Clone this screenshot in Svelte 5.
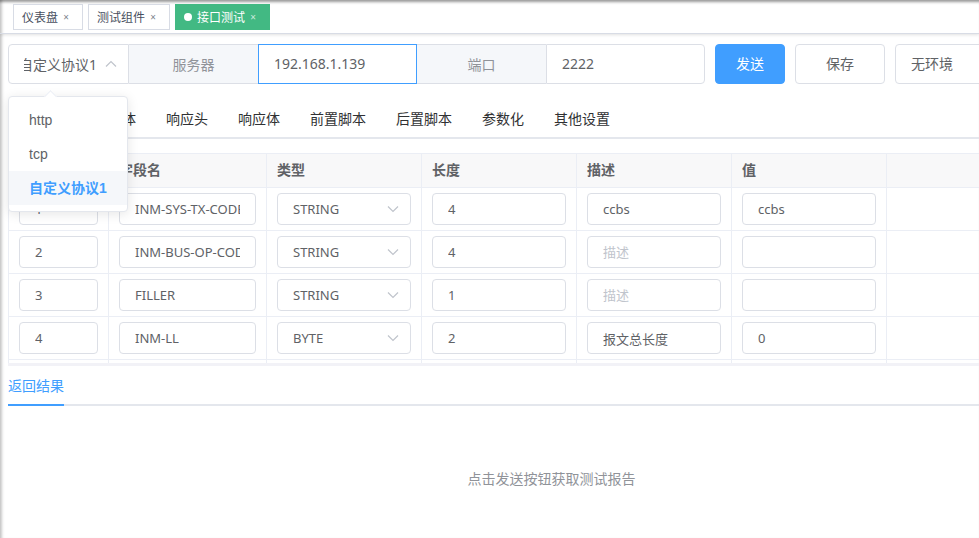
<script>
  const tags = [
    { title: '仪表盘' },
    { title: '测试组件' },
    { title: '接口测试', active: true }
  ];

  const protocols = ['http', 'tcp', '自定义协议1'];
  const tabs = ['请求体', '响应头', '响应体', '前置脚本', '后置脚本', '参数化', '其他设置'];
  const types = ['STRING', 'BYTE'];

  let protocol = $state('自定义协议1');
  let menuOpen = $state(true);
  let server = $state('192.168.1.139');
  let port = $state('2222');

  let rows = $state([
    { no: '1', name: 'INM-SYS-TX-CODE', type: 'STRING', length: '4', desc: 'ccbs', value: 'ccbs' },
    { no: '2', name: 'INM-BUS-OP-CODE', type: 'STRING', length: '4', desc: '', value: '' },
    { no: '3', name: 'FILLER', type: 'STRING', length: '1', desc: '', value: '' },
    { no: '4', name: 'INM-LL', type: 'BYTE', length: '2', desc: '报文总长度', value: '0' },
    { no: '', name: '', type: '', length: '', desc: '', value: '' }
  ]);

  function pick(name) {
    protocol = name;
    menuOpen = false;
  }
</script>

{#snippet chevron()}
  <svg class="chevron" viewBox="0 0 12 8" aria-hidden="true">
    <path d="M1 1.5 L6 6.5 L11 1.5" />
  </svg>
{/snippet}

<div class="page">
  <nav class="tags">
    {#each tags as tag}
      <a href="#{tag.title}" class="tag" class:active={tag.active}>
        {tag.title}<span class="close">×</span>
      </a>
    {/each}
  </nav>

  <main>
    <div class="toolbar">
      <div class="group">
        <div class="select protocol" class:open={menuOpen}>
          <select aria-label="协议" bind:value={protocol}>
            {#each protocols as p}
              <option>{p}</option>
            {/each}
          </select>
          {@render chevron()}
          {#if menuOpen}
            <ul class="menu">
              {#each protocols as p}
                <li><button class:selected={p === protocol} onclick={() => pick(p)}>{p}</button></li>
              {/each}
            </ul>
          {/if}
        </div>
        <label class="addon" for="server">服务器</label>
        <input id="server" class="focused" bind:value={server} />
        <label class="addon" for="port">端口</label>
        <input id="port" class="last" bind:value={port} />
      </div>
      <button class="btn primary">发送</button>
      <button class="btn">保存</button>
      <div class="select env">
        <select aria-label="环境">
          <option>无环境</option>
        </select>
        {@render chevron()}
      </div>
    </div>

    <div class="tabs request">
      {#each tabs as tab}
        <button class="tab">{tab}</button>
      {/each}
    </div>

    <div class="table-wrap">
      <table>
        <colgroup>
          <col class="c-no" />
          <col class="c-name" />
          <col class="c-std" />
          <col class="c-std" />
          <col class="c-std" />
          <col class="c-std" />
          <col />
        </colgroup>
        <thead>
          <tr>
            <th></th>
            <th>字段名</th>
            <th>类型</th>
            <th>长度</th>
            <th>描述</th>
            <th>值</th>
            <th></th>
          </tr>
        </thead>
        <tbody>
          {#each rows as row}
            <tr>
              <td><input aria-label="序号" bind:value={row.no} /></td>
              <td><input aria-label="字段名" bind:value={row.name} /></td>
              <td>
                <div class="select">
                  <select aria-label="类型" bind:value={row.type}>
                    {#each types as t}
                      <option>{t}</option>
                    {/each}
                  </select>
                  {@render chevron()}
                </div>
              </td>
              <td><input aria-label="长度" bind:value={row.length} /></td>
              <td><input aria-label="描述" placeholder="描述" bind:value={row.desc} /></td>
              <td><input aria-label="值" bind:value={row.value} /></td>
              <td></td>
            </tr>
          {/each}
        </tbody>
      </table>
    </div>

    <div class="tabs result">
      <button class="tab current">返回结果</button>
    </div>
    <p class="empty">点击发送按钮获取测试报告</p>
  </main>
</div>

<style>
  :global(body) {
    margin: 0;
    background: #fff;
    color: #303133;
    font-family: "Noto Sans", "Noto Sans CJK SC", sans-serif;
    font-size: 14px;
  }

  .page {
    min-height: 100vh;
    overflow: hidden;
    box-sizing: border-box;
    box-shadow: inset 0 4px 3px -2px rgba(0, 0, 0, 0.4), inset 4px 0 3px -2px rgba(0, 0, 0, 0.22);
  }

  input, select, button {
    box-sizing: border-box;
    margin: 0;
    font: inherit;
    outline: none;
  }

  input, select {
    width: 100%;
    height: 32px;
    padding: 0 15px;
    border: 1px solid #dcdfe6;
    border-radius: 4px;
    background: #fff;
    color: #606266;
    font-size: 13px;
    appearance: none;
  }
  input::placeholder { color: #c0c4cc; }

  /* opened pages */
  .tags {
    display: flex;
    gap: 5px;
    height: 34px;
    box-sizing: border-box;
    padding: 4px 13px 0;
    border-bottom: 1px solid #d8dce5;
    box-shadow: 0 1px 3px rgba(0, 0, 0, 0.12);
  }
  .tag {
    display: flex;
    align-items: center;
    height: 26px;
    box-sizing: border-box;
    padding: 0 8px;
    border: 1px solid #d8dce5;
    background: #fff;
    color: #495060;
    font-size: 12px;
    text-decoration: none;
  }
  .tag.active { background: #42b983; border-color: #42b983; color: #fff; }
  .tag.active::before {
    content: '';
    width: 8px;
    height: 8px;
    margin-right: 5px;
    border-radius: 50%;
    background: #fff;
  }
  .close { width: 16px; text-align: center; font-size: 10px; opacity: 0.7; }

  main { min-width: 1087px; padding: 10px 8px 0; }

  /* request line */
  .toolbar { display: flex; gap: 10px; }
  .toolbar input, .toolbar select { height: 40px; padding-bottom: 2px; font-size: 14px; }
  .group { display: flex; width: 697px; }
  .group input { flex: 1; min-width: 0; border-radius: 0; }
  .group input.focused { border-color: #409eff; }
  .group input.last { border-radius: 0 4px 4px 0; }
  .addon {
    display: flex;
    align-items: center;
    justify-content: center;
    width: 129px;
    box-sizing: border-box;
    border: 1px solid #dcdfe6;
    border-width: 1px 0;
    background: #f5f7fa;
    color: #909399;
  }

  .select { position: relative; }
  .chevron {
    position: absolute;
    top: 50%;
    right: 12px;
    width: 12px;
    height: 8px;
    margin-top: -4px;
    pointer-events: none;
  }
  .chevron path { fill: none; stroke: #c0c4cc; stroke-width: 1.2; }
  .open .chevron { transform: rotate(180deg); }

  .protocol { width: 121px; }
  .protocol select { padding: 0 30px 0 15px; border-radius: 4px 0 0 4px; text-indent: -5px; }
  .env { flex: 1; }

  .menu {
    position: absolute;
    top: 52px;
    left: 0;
    z-index: 2;
    width: 120px;
    box-sizing: border-box;
    margin: 0;
    padding: 6px 0;
    border: 1px solid #e4e7ed;
    border-radius: 4px;
    background: #fff;
    box-shadow: 0 2px 12px rgba(0, 0, 0, 0.1);
    list-style: none;
  }
  .menu::before {
    content: '';
    position: absolute;
    top: -5px;
    left: 37px;
    width: 8px;
    height: 8px;
    border: 1px solid #ebeef5;
    border-width: 1px 0 0 1px;
    background: #fff;
    transform: rotate(45deg);
  }
  .menu button {
    display: block;
    width: 100%;
    height: 34px;
    padding: 0 20px;
    border: 0;
    background: none;
    color: #606266;
    font-family: "Liberation Sans", "Noto Sans CJK SC", sans-serif;
    text-align: left;
    white-space: nowrap;
  }
  .menu button.selected { padding-bottom: 2px; background: #f5f7fa; color: #409eff; font-weight: 700; }

  .btn {
    width: 90px;
    height: 40px;
    padding: 0 0 2px;
    border: 1px solid #dcdfe6;
    border-radius: 4px;
    background: #fff;
    color: #606266;
  }
  .btn.primary { width: 70px; background: #409eff; border-color: #409eff; color: #fff; }

  .tabs {
    display: flex;
    gap: 30px;
    height: 40px;
    box-sizing: border-box;
    border-bottom: 2px solid #e4e7ed;
  }
  .tabs.request { margin-top: 15px; padding-left: 86px; }
  .tab {
    height: 40px;
    padding: 0 0 2px;
    border: 0;
    background: none;
    color: #303133;
    white-space: nowrap;
  }
  .tab.current { color: #409eff; box-shadow: inset 0 -2px #409eff; }

  /* message fields */
  .table-wrap {
    height: 210px;
    margin-top: 14px;
    overflow: hidden;
    border-bottom: 3px solid #f2f2f7;
  }
  table {
    width: 100%;
    border: 1px solid #ebeef5;
    border-width: 1px 0 0 1px;
    border-spacing: 0;
    table-layout: fixed;
  }
  th, td {
    box-sizing: border-box;
    padding: 5px 10px;
    border: 1px solid #ebeef5;
    border-width: 0 1px 1px 0;
    text-align: left;
  }
  th { height: 34px; padding: 0 10px 2px; background: #f8f8f9; color: #606266; font-weight: 700; line-height: 20px; }
  td { height: 43px; }
  td input, td select { display: block; }
  .c-no { width: 100px; }
  .c-name { width: 158px; }
  .c-std { width: 155px; }

  .empty { margin: 63px 0 0; color: #909399; line-height: 20px; text-align: center; }
</style>
